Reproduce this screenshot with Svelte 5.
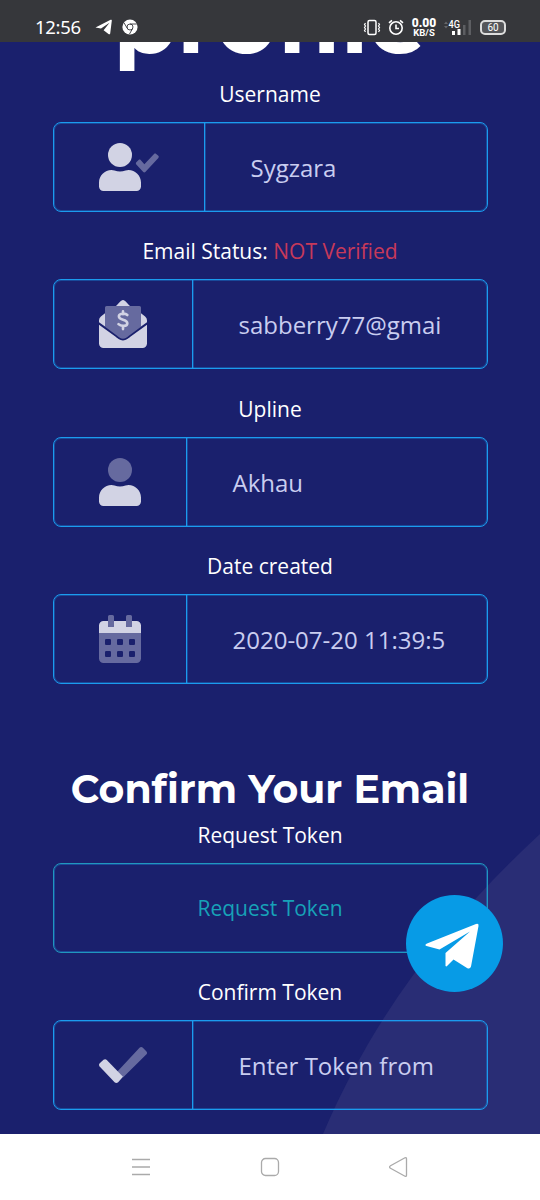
<script lang="ts">
  type Icon = 'user-check' | 'envelope' | 'user' | 'calendar' | 'check';

  const fields: { label: string; status?: string; icon: Icon; iconWidth: number; value: string }[] = [
    { label: 'Username', icon: 'user-check', iconWidth: 60, value: 'Sygzara' },
    { label: 'Email Status:', status: 'NOT Verified', icon: 'envelope', iconWidth: 48, value: 'sabberry77@gmai' },
    { label: 'Upline', icon: 'user', iconWidth: 42, value: 'Akhau' },
    { label: 'Date created', icon: 'calendar', iconWidth: 42, value: '2020-07-20 11:39:5' },
  ];

  const token = { label: 'Confirm Token', icon: 'check' as Icon, iconWidth: 48, value: 'Enter Token from' };
</script>

{#snippet glyph(name: Icon, width: number)}
  <svg class="glyph" viewBox="0 0 {(width * 32) / 3} 512" style="width: {width}px">
    {#if name === 'user-check'}
      <circle cx="224" cy="128" r="128" />
      <path d="M314 288c-10 0-20 2-31 6a178 178 0 0 1-118 0c-11-4-21-6-31-6C60 288 0 348 0 422v42c0 27 21 48 48 48h352c27 0 48-21 48-48v-42c0-74-60-134-134-134z" />
      <path class="dim" d="M633 159l-139 151c-6 7-16 7-22 0l-74-82c-6-7-6-16 0-23l24-23c7-7 16-7 22 0l40 44 103-109c7-6 16-6 23 0l23 20c6 6 6 16 0 22z" />
    {:else if name === 'envelope'}
      <path d="M330 64c-18-15-51-64-74-64s-56 49-74 64z" />
      <path class="dim" d="M432 64H80a16 16 0 0 0-16 16v206l129 94c14 11 42 34 63 34s49-23 63-34l129-94V80a16 16 0 0 0-16-16z" />
      <path d="M64 140L20 175A54 54 0 0 0 0 217v19l64 46zm384 0v142l64-46v-19a54 54 0 0 0-20-42z" />
      <path d="M338 390c-17 13-49 42-82 42s-65-29-82-42L0 264v200a48 48 0 0 0 48 48h416a48 48 0 0 0 48-48V264z" />
      <path class="line" d="M302 160c-17-18-86-23-90 12-4 50 90 26 90 76 0 38-70 34-94 10M256 120v32m0 126v32" />
    {:else if name === 'user'}
      <circle class="dim" cx="224" cy="128" r="128" />
      <path d="M314 288c-10 0-20 2-31 6a178 178 0 0 1-118 0c-11-4-21-6-31-6C60 288 0 348 0 422v42c0 27 21 48 48 48h352c27 0 48-21 48-48v-42c0-74-60-134-134-134z" />
    {:else if name === 'calendar'}
      <path d="M0 192v-80a48 48 0 0 1 48-48h48v48a16 16 0 0 0 16 16h32a16 16 0 0 0 16-16V64h128v48a16 16 0 0 0 16 16h32a16 16 0 0 0 16-16V64h48a48 48 0 0 1 48 48v80z" />
      <path class="dim" d="M112 0h32a16 16 0 0 1 16 16v96a16 16 0 0 1-16 16h-32a16 16 0 0 1-16-16V16a16 16 0 0 1 16-16zm192 0h32a16 16 0 0 1 16 16v96a16 16 0 0 1-16 16h-32a16 16 0 0 1-16-16V16a16 16 0 0 1 16-16z" />
      <path class="dim" fill-rule="evenodd" d="M0 192h448v272a48 48 0 0 1-48 48H48a48 48 0 0 1-48-48zM76 256a12 12 0 0 0-12 12v40a12 12 0 0 0 12 12h40a12 12 0 0 0 12-12v-40a12 12 0 0 0-12-12zm128 0a12 12 0 0 0-12 12v40a12 12 0 0 0 12 12h40a12 12 0 0 0 12-12v-40a12 12 0 0 0-12-12zm128 0a12 12 0 0 0-12 12v40a12 12 0 0 0 12 12h40a12 12 0 0 0 12-12v-40a12 12 0 0 0-12-12zM76 384a12 12 0 0 0-12 12v40a12 12 0 0 0 12 12h40a12 12 0 0 0 12-12v-40a12 12 0 0 0-12-12zm128 0a12 12 0 0 0-12 12v40a12 12 0 0 0 12 12h40a12 12 0 0 0 12-12v-40a12 12 0 0 0-12-12zm128 0a12 12 0 0 0-12 12v40a12 12 0 0 0 12 12h40a12 12 0 0 0 12-12v-40a12 12 0 0 0-12-12z" />
    {:else}
      <path class="dim" d="M504 144L256 390l-62-62L432 72c10-10 26-10 36 0l36 36c11 10 11 26 0 36z" />
      <path d="M166 441L7 272c-9-10-9-25 1-35l40-36c10-9 25-9 35 1l173 180-52 59c-11 10-28 10-38 0z" />
    {/if}
  </svg>
{/snippet}

{#snippet box(icon: Icon, width: number, value: string)}
  <div class="box">
    <div class="box-icon">{@render glyph(icon, width)}</div>
    <div class="box-value">{value}</div>
  </div>
{/snippet}

<div class="screen">
  <header class="status-bar">
    <div class="status-left">
      <span class="clock">12:56</span>
      <svg width="18" height="16" viewBox="0 0 18 16"><path d="M.5 8.500L15.600.800c.7-.3 1.400.1 1.200 1l-1.600 12.700c-.2.9-1 1.100-1.700.6L8.600 11.200 14.500 3.800 6 9.600z" fill="#fff" /></svg>
      <svg width="16" height="16" viewBox="0 0 16 16"><circle cx="8" cy="8" r="7.600" fill="#fff" /><circle cx="8" cy="8" r="3" fill="none" stroke="#36373b" stroke-width=".9" /><path d="M8 5h6.800M5.400 9.500L2 3.800M10.600 9.500L7.500 15" stroke="#36373b" stroke-width=".9" /></svg>
    </div>
    <div class="status-right">
      <svg width="18" height="17" viewBox="0 0 18 17" fill="none" stroke="#fff" stroke-width="1.500"><rect x="5" y="1.500" width="8" height="14" rx="1.500" /><path d="M2.500 4l-1 1.500 1 1.500-1 1.500 1 1.500-1 1.500 1 1.500M15.500 4l1 1.500-1 1.500 1 1.500-1 1.500 1 1.500-1 1.500" stroke-width="1.200" /></svg>
      <svg width="16" height="17" viewBox="0 0 16 17" fill="none" stroke="#fff" stroke-width="1.600"><circle cx="8" cy="9" r="6.200" /><path d="M8 5.500v4h3M1 3.800L4 1.300M15 3.800L12 1.300" /></svg>
      <div class="speed"><b>0.00</b><span>KB/S</span></div>
      <svg class="signal" width="28" height="17" viewBox="0 0 28 17">
        <path d="M0 5l2-2.500L4 5zm0 2l2 2.500L4 7z" fill="#66676a" />
        <text x="4.500" y="8.500" textLength="11.500" lengthAdjust="spacingAndGlyphs">4G</text>
        <path d="M8 12h3v4H8zM13.500 10h3v6h-3z" fill="#fff" /><path d="M19 6h2.500v10H19zM24.500 1H27v15h-2.500z" fill="#5d5e62" />
      </svg>
      <div class="battery"><span>60</span></div>
    </div>
  </header>

  <main class="page">
    <svg class="backdrop" viewBox="0 0 540 1092"><path d="M540 792C450 875 375 970 323 1092H540z" fill="#292d75" /></svg>

    <h1>profile</h1>

    {#each fields as field}
      <section class="field">
        <div class="label">{field.label}{#if field.status}&nbsp;<span class="danger">{field.status}</span>{/if}</div>
        {@render box(field.icon, field.iconWidth, field.value)}
      </section>
    {/each}

    <h2>Confirm Your Email</h2>

    <section class="field">
      <div class="label">Request Token</div>
      <button class="box request">Request Token</button>
    </section>
    <section class="field">
      <div class="label">{token.label}</div>
      {@render box(token.icon, token.iconWidth, token.value)}
    </section>

    <button class="telegram" aria-label="Telegram">
      <svg width="97" height="97" viewBox="0 0 97 97"><path d="M21 48.500L70 29q3-1 2.500 2L65 71.500q-1 3-4 1.500L47.500 64.500 40.500 71.500 39.500 71V58L64 36.500 33.500 54.500 20.500 51q-2.500-1 .5-2.500z" fill="#fff" /></svg>
    </button>
  </main>

  <nav class="nav-bar">
    <svg width="20" height="20" viewBox="0 0 20 20"><path d="M1 2.500h18M1 10h18M1 17.500h18" /></svg>
    <svg width="20" height="20" viewBox="0 0 20 20"><rect x="1.500" y="1.500" width="17" height="17" rx="4" /></svg>
    <svg width="20" height="22" viewBox="0 0 20 22"><path d="M16 1.800L1.500 9.800q-1.800 1.200 0 2.400L16 20.200q1.500.5 1.500-1V2.800q0-1.500-1.500-1z" /></svg>
  </nav>
</div>

<style>
  :global(body) { margin: 0; }

  .screen {
    width: 540px;
    height: 1200px;
    display: flex;
    flex-direction: column;
    overflow: hidden;
    font-family: 'Open Sans', sans-serif;
    color: #fff;
  }

  .status-bar {
    height: 42px;
    flex: none;
    box-sizing: border-box;
    padding: 12px 34px 0 35px;
    display: flex;
    justify-content: space-between;
    background: #36373b;
  }
  .status-left, .status-right { display: flex; align-items: center; height: 30px; }
  .clock { font: 18.5px 'Noto Sans', sans-serif; letter-spacing: -0.3px; width: 60px; margin-bottom: 2px; }
  .status-left svg + svg { margin-left: 9px; }
  .status-right { gap: 7px; }
  .speed {
    display: flex;
    flex-direction: column;
    align-items: center;
    width: 26px;
    font: 700 12px/10px Roboto, sans-serif;
  }
  .speed span { font-size: 9.5px; line-height: 9px; }
  .signal { margin-right: 1px; }
  .signal text { font: 500 10.5px Roboto, sans-serif; fill: #fff; }
  .battery {
    width: 22px;
    height: 11px;
    border: 2px solid #ddd;
    border-radius: 5px;
    background: #55565a;
    font: 10px/11px Roboto, sans-serif;
    text-align: center;
  }

  .page {
    position: relative;
    height: 1092px;
    flex: none;
    box-sizing: border-box;
    padding: 0 52.5px;
    overflow: hidden;
    background: #1a206d;
  }
  .backdrop { position: absolute; inset: 0; width: 540px; height: 1092px; }

  h1, h2 {
    position: relative;
    margin: 0;
    font-family: Montserrat, Inter, sans-serif;
    font-weight: 700;
    font-variant-ligatures: none;
    text-align: center;
    white-space: nowrap;
  }
  h1 { height: 101.6px; margin-top: -67px; font-size: 92.5px; line-height: 90px; }
  h2 { height: 50px; margin: 79.5px 0 4px; font-size: 39.4px; line-height: 50px; }

  .field { position: relative; margin-bottom: 22.5px; }
  .label {
    height: 45px;
    font-size: 21px;
    line-height: 35px;
    text-align: center;
  }
  .danger { color: #c7395a; }

  .box {
    display: flex;
    box-sizing: border-box;
    width: 435px;
    height: 90px;
    border: 1px solid #1b9bee;
    border-radius: 8px;
    box-shadow: inset 0 0 0 1px rgba(27, 155, 238, 0.35);
  }
  .box-icon {
    display: flex;
    align-items: center;
    padding: 0 45px;
    border-right: 1px solid #1b9bee;
    box-shadow: 1px 0 rgba(27, 155, 238, 0.35);
  }
  .box-value {
    padding-left: 46px;
    font-size: 24px;
    line-height: 89px;
    color: #c9cdf0;
    white-space: nowrap;
  }
  .glyph { height: 48px; fill: #d2d3e4; }
  .glyph .dim { fill: #666a9f; }
  .glyph .line { fill: none; stroke: #d2d3e4; stroke-width: 28; stroke-linecap: round; }

  .request {
    justify-content: center;
    align-items: center;
    padding: 0;
    border-color: #2197bd;
    background: none;
    color: #17a2b8;
    font: 21px 'Open Sans', sans-serif;
  }

  .telegram {
    position: absolute;
    left: 406px;
    top: 853px;
    width: 97px;
    height: 97px;
    padding: 0;
    border: 0;
    border-radius: 50%;
    background: #079be6;
  }

  .nav-bar {
    flex: 1;
    display: flex;
    justify-content: space-between;
    align-items: center;
    padding: 0 131px;
    background: #fff;
  }
  .nav-bar svg { fill: none; stroke: #aaa; stroke-width: 1.3; }
</style>
